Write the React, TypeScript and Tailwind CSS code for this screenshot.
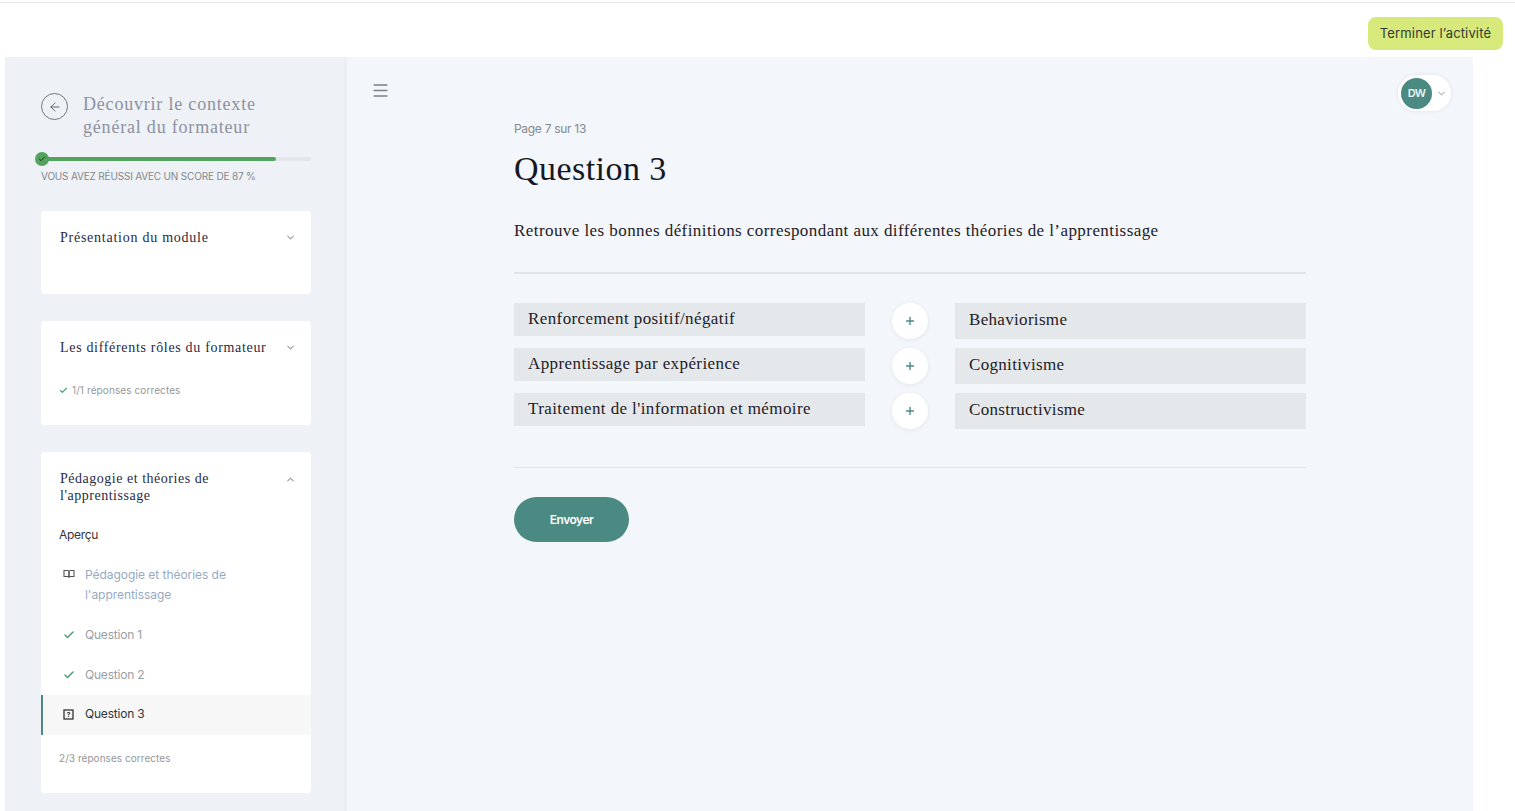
import { ArrowLeft, Check, ChevronDown, ChevronUp, Menu, Plus } from "lucide-react";

const serif = "font-['Liberation_Serif',serif]";
const sans = "font-['Inter',sans-serif]";

const pairs = [
  ["Renforcement positif/négatif", "Behaviorisme"],
  ["Apprentissage par expérience", "Cognitivisme"],
  ["Traitement de l'information et mémoire", "Constructivisme"],
];

const BookIcon = () => (
  <svg width="12" height="12" viewBox="0 0 12 12" fill="none" stroke="#555" strokeWidth="1.1">
    <path d="M1 2.5h3.6c.8 0 1.4.5 1.4 1.2v5.8c0-.6-.6-1-1.4-1H1z" />
    <path d="M11 2.5H7.4c-.8 0-1.4.5-1.4 1.2v5.8c0-.6.6-1 1.4-1H11z" />
  </svg>
);

const QuestionIcon = () => (
  <svg width="11" height="11" viewBox="0 0 11 11" fill="none">
    <rect x="1" y="1" width="9" height="9" stroke="#333" strokeWidth="1.3" />
    <text x="5.5" y="8" textAnchor="middle" fontSize="6.5" fontWeight="700" fill="#333" fontFamily="Inter, sans-serif">?</text>
  </svg>
);

const Sidebar = () => (
  <aside className="w-[342px] shrink-0 bg-[#eef1f5] border-r-[4px] border-[#ebeef2] pl-[36px] pr-[32px]">
    <div className="flex pt-[35px]">
      <div className="w-[27px] h-[27px] mt-[1px] rounded-full border border-[#757575] flex items-center justify-center shrink-0">
        <ArrowLeft size={14} strokeWidth={1.5} color="#555" />
      </div>
      <h1 className={`${serif} ml-[15px] mt-[1px] text-[18px] leading-[23px] tracking-[0.8px] text-[#8d92a0]`}>
        Découvrir le contexte
        <br />
        général du formateur
      </h1>
    </div>

    <div className="relative mt-[18px] h-[4px] bg-[#e3e6ea] rounded-full">
      <div className="h-full w-[235px] bg-[#53a35e] rounded-full" />
      <div className="absolute left-[-6px] top-[-5px] w-[14px] h-[14px] rounded-full bg-[#53a35e] flex items-center justify-center">
        <Check size={8} strokeWidth={3} color="#1c2b1f" />
      </div>
    </div>
    <p className={`${sans} mt-[8px] text-[10px] leading-[14px] tracking-[-0.18px] text-[#85888d] whitespace-nowrap`}>
      VOUS AVEZ RÉUSSI AVEC UN SCORE DE 87 %
    </p>

    <section className="mt-[28px] h-[83px] bg-white rounded-[4px] pt-[18px] pl-[19px] pr-[15px]">
      <div className="flex justify-between items-center">
        <h2 className={`${serif} text-[14px] leading-[17px] tracking-[0.75px] text-[#272b45]`}>Présentation du module</h2>
        <ChevronDown size={11} strokeWidth={2.5} color="#9a9ea4" />
      </div>
    </section>

    <section className="mt-[27px] h-[104px] bg-white rounded-[4px] pt-[18px] pl-[19px] pr-[15px]">
      <div className="flex justify-between items-center">
        <h2 className={`${serif} text-[14px] leading-[17px] tracking-[0.68px] text-[#272b45]`}>Les différents rôles du formateur</h2>
        <ChevronDown size={11} strokeWidth={2.5} color="#9a9ea4" />
      </div>
      <div className="mt-[27px] flex items-center gap-[4px] -ml-px">
        <Check size={9} strokeWidth={3} color="#4c9f70" />
        <span className={`${sans} text-[10px] leading-[14px] tracking-[0.1px] text-[#94979c]`}>1/1 réponses correctes</span>
      </div>
    </section>

    <section className="mt-[27px] h-[341px] bg-white rounded-[4px] pt-[18px]">
      <div className="flex justify-between pl-[19px] pr-[15px]">
        <h2 className={`${serif} text-[14px] leading-[17px] tracking-[0.52px] text-[#272b45]`}>
          Pédagogie et théories de
          <br />
          l'apprentissage
        </h2>
        <ChevronUp size={11} strokeWidth={2.5} color="#9a9ea4" className="mt-[4px]" />
      </div>
      <p className={`${sans} mt-[22px] pl-[18px] text-[12px] leading-[17px] tracking-[-0.3px] text-[#30343c]`}>Aperçu</p>

      <div className="mt-[22px] flex pl-[22px]">
        <div className="mt-[3px] w-[12px] shrink-0"><BookIcon /></div>
        <span className={`${sans} ml-[10px] text-[12px] leading-[20px] tracking-[-0.05px] text-[#96aac6]`}>
          Pédagogie et théories de
          <br />
          l'apprentissage
        </span>
      </div>
      <div className="mt-[20px] flex items-center h-[20px] pl-[22px]">
        <Check size={12} strokeWidth={3} color="#4c9f70" />
        <span className={`${sans} ml-[10px] text-[12px] tracking-[-0.2px] text-[#9a9ea3]`}>Question 1</span>
      </div>
      <div className="mt-[20px] flex items-center h-[20px] pl-[22px]">
        <Check size={12} strokeWidth={3} color="#4c9f70" />
        <span className={`${sans} ml-[10px] text-[12px] tracking-[-0.2px] text-[#9a9ea3]`}>Question 2</span>
      </div>
      <div className="mt-[10px] h-[40px] flex items-center bg-[#f7f7f8] border-l-[2px] border-[#4a8a82] pl-[20px] pb-[2px]">
        <QuestionIcon />
        <span className={`${sans} ml-[11px] text-[12px] tracking-[-0.2px] text-[#30343c]`}>Question 3</span>
      </div>
      <p className={`${sans} mt-[16px] pl-[18px] text-[10px] leading-[14px] tracking-[0.05px] text-[#94979c]`}>2/3 réponses correctes</p>
    </section>
  </aside>
);

export default function App() {
  return (
    <div className="h-[811px] overflow-hidden bg-white">
      <header className="h-[57px] pt-[2px]">
        <div className="h-px bg-[#e5e5e5]" />
        <div className="flex justify-end pt-[14px] pr-[12px]">
          <button className={`${sans} h-[33px] w-[135px] rounded-[8px] bg-[#d6e97a] text-[13px] tracking-[0.15px] text-[#333a36]`}>
            Terminer l’activité
          </button>
        </div>
      </header>

      <div className="ml-[5px] w-[1468px] h-[754px] flex bg-[#f3f6fa]">
        <Sidebar />

        <main className="flex-1 relative">
          <div className="relative">
            <Menu size={19} strokeWidth={2} color="#808080" className="absolute left-[24px] top-[24px]" />
            <div className="absolute right-[22px] top-[18px] h-[36px] w-[53px] rounded-full bg-white shadow-[0_0_5px_rgba(0,0,0,0.08)] flex items-center pl-[3px]">
              <div className="w-[31px] h-[31px] rounded-full bg-[#4a8a82] flex items-center justify-center">
                <span className={`${sans} text-[11px] font-semibold tracking-[-0.7px] text-[#eef4f3]`}>DW</span>
              </div>
              <ChevronDown size={11} strokeWidth={2.5} color="#b5b8bc" className="ml-[4px]" />
            </div>
          </div>

          <div className="ml-[167px] w-[792px] pt-[64px]">
            <p className={`${sans} text-[12px] leading-[16px] tracking-[-0.3px] text-[#85898e]`}>Page 7 sur 13</p>
            <h1 className={`${serif} mt-[12px] text-[34px] leading-[40px] tracking-[0.45px] text-[#16181d]`}>Question 3</h1>
            <p className={`${serif} mt-[31px] text-[17px] leading-[22px] tracking-[0.43px] text-[#1e2026]`}>
              Retrouve les bonnes définitions correspondant aux différentes théories de l’apprentissage
            </p>
            <div className="mt-[30px] h-[2px] bg-[#e0e5ea]" />

            <div className="mt-[29px] flex flex-col gap-[9px]">
              {pairs.map(([left, right]) => (
                <div key={left} className="flex h-[36px]">
                  <div className={`${serif} w-[351px] h-[33px] bg-[#e5e8eb] pl-[14px] text-[17px] leading-[31px] tracking-[0.4px] text-[#1e2026]`}>
                    {left}
                  </div>
                  <div className="w-[90px] flex justify-center">
                    <button className="w-[36px] h-[36px] rounded-full bg-white shadow-[0_1px_5px_rgba(0,0,0,0.07)] flex items-center justify-center">
                      <Plus size={12} strokeWidth={2.75} color="#4a8a82" />
                    </button>
                  </div>
                  <div className={`${serif} w-[351px] h-[36px] bg-[#e5e8eb] pl-[14px] text-[17px] leading-[34px] tracking-[0.32px] text-[#1e2026]`}>
                    {right}
                  </div>
                </div>
              ))}
            </div>

            <div className="mt-[38px] h-px bg-[#e0e5ea]" />
            <button className={`${sans} mt-[29px] w-[115px] h-[45px] rounded-full bg-[#4a8a82] text-[12px] font-semibold tracking-[-0.5px] text-white`}>
              Envoyer
            </button>
          </div>
        </main>
      </div>
    </div>
  );
}
